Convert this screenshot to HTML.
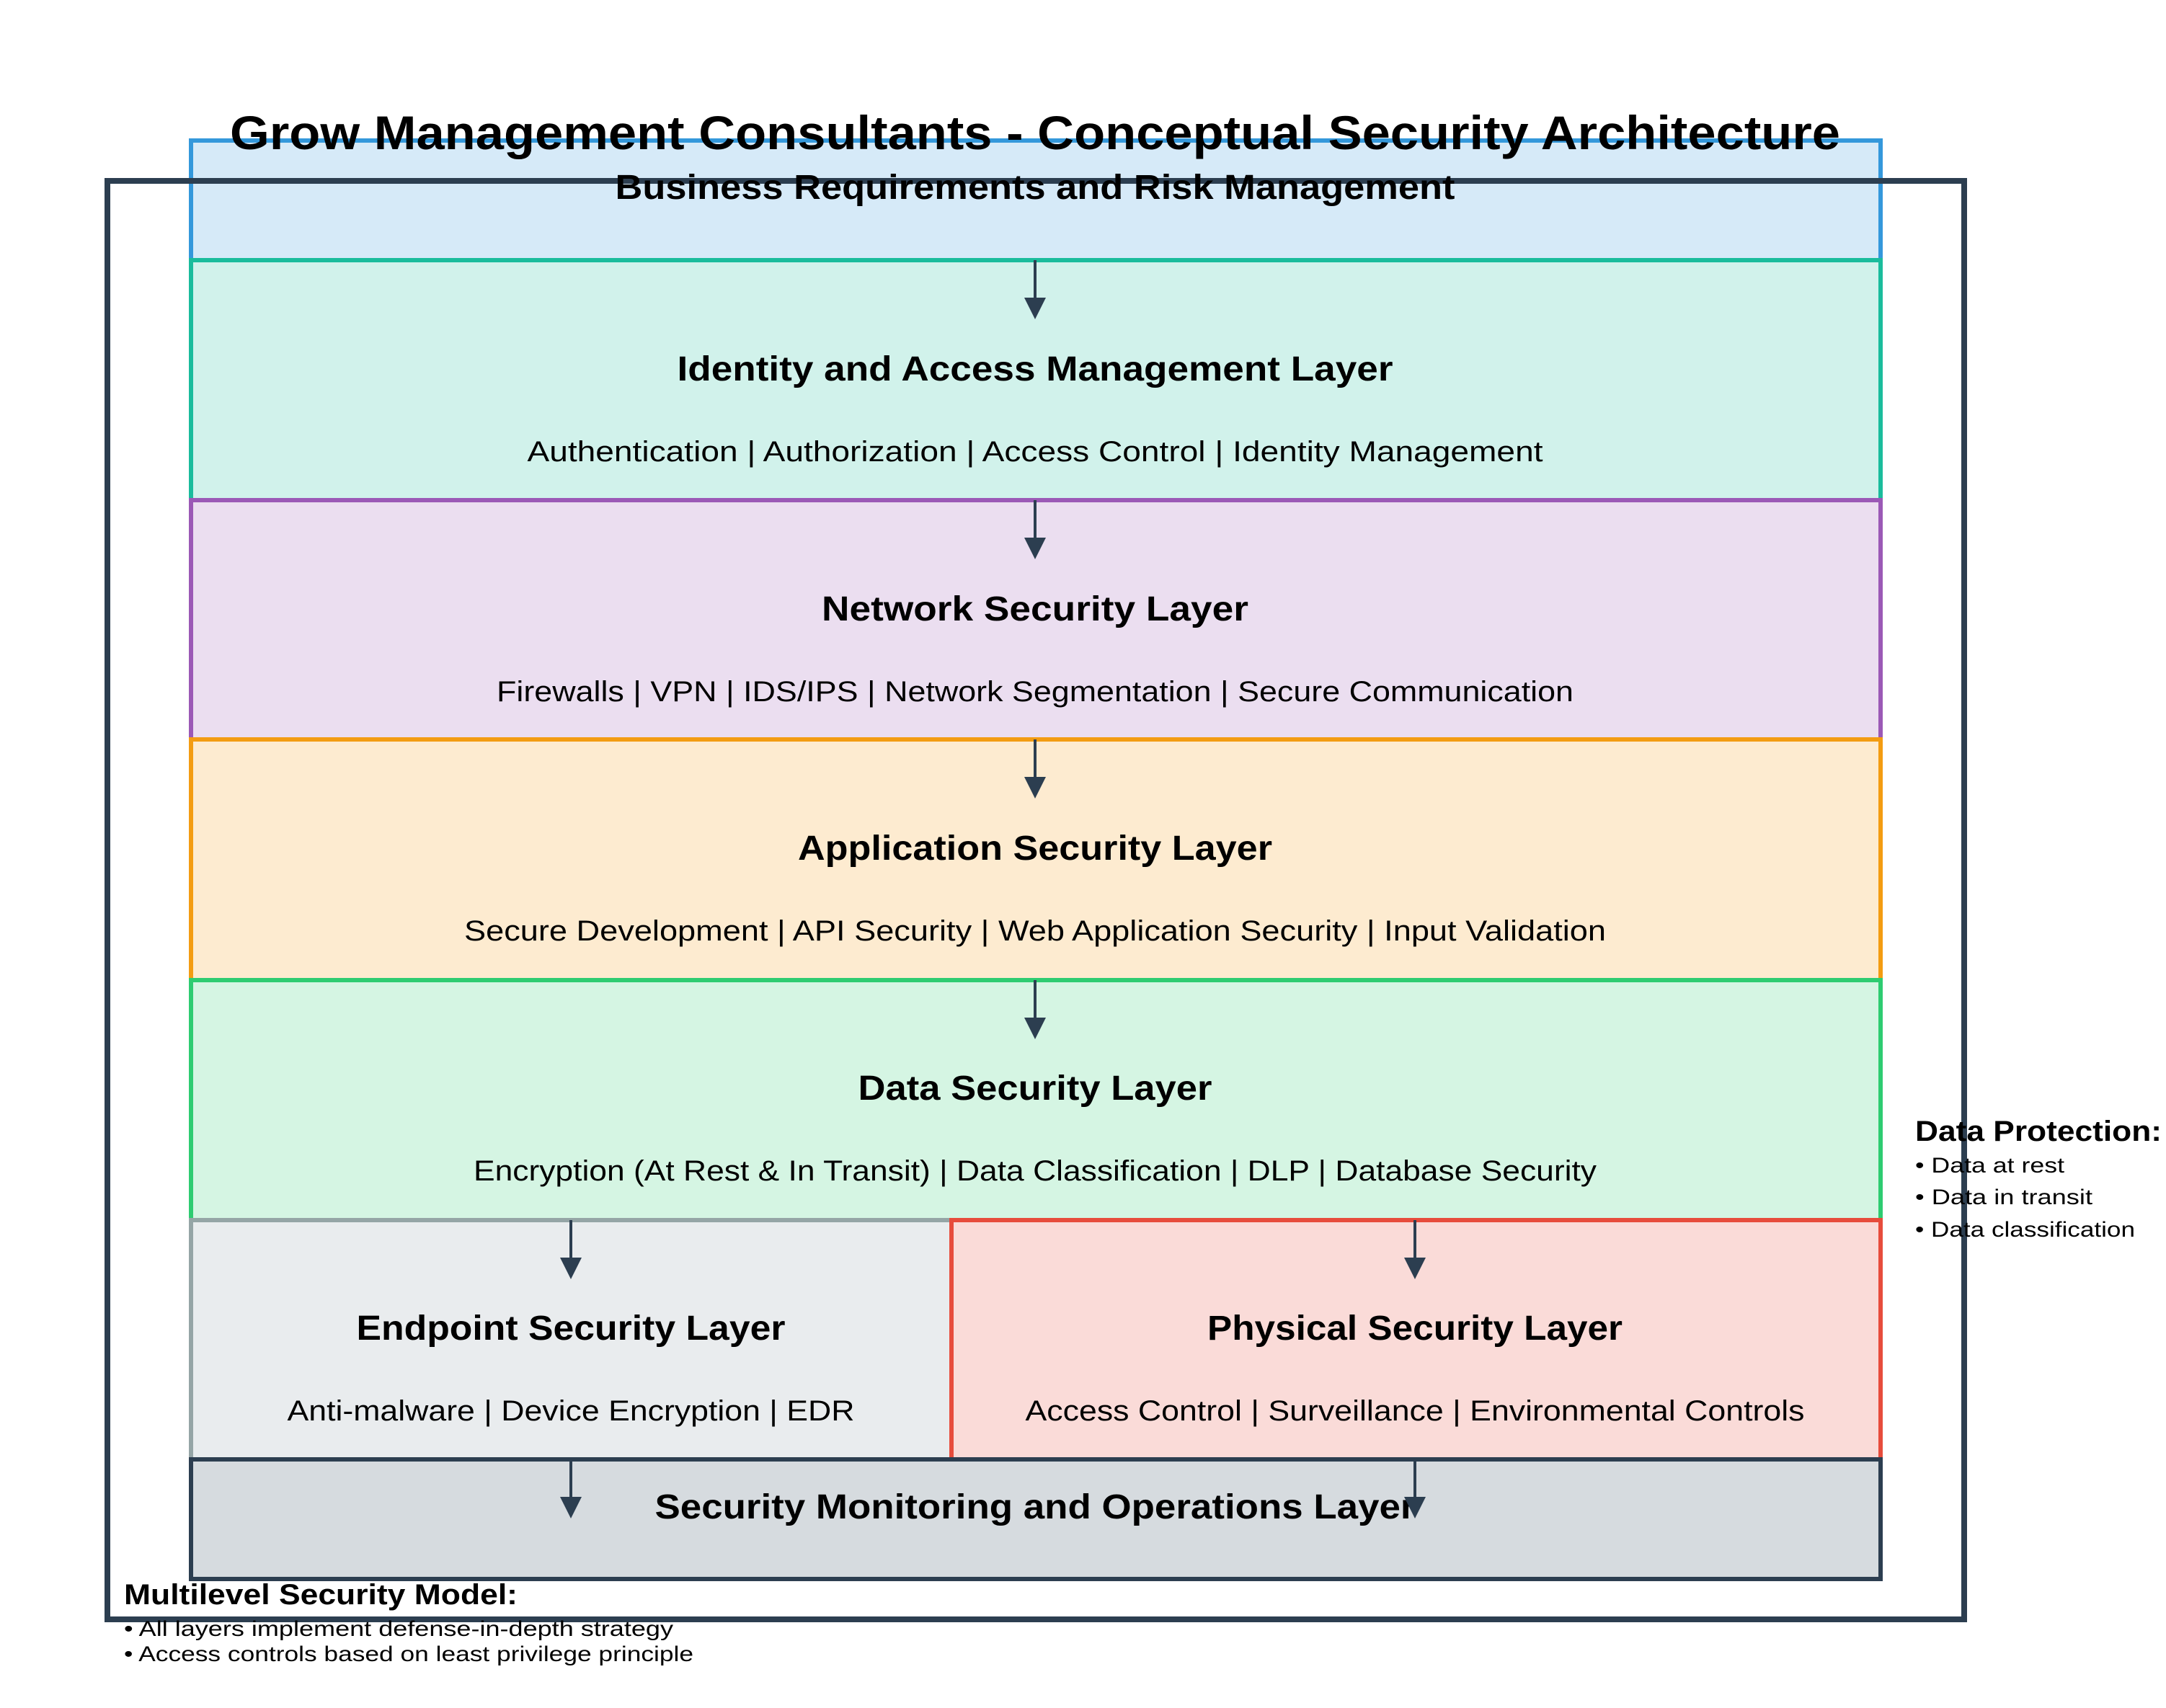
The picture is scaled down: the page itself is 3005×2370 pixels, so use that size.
<!DOCTYPE html>
<html><head><meta charset="utf-8"><style>
html,body{margin:0;padding:0;background:#fff;}
svg{display:block;}
text{font-family:"Liberation Sans","DejaVu Sans",sans-serif;fill:#000;}
.h{font-weight:bold;font-size:48px;}
.s{font-size:40px;}
</style></head><body>
<svg width="3005" height="2370" viewBox="0 0 3005 2370" xmlns="http://www.w3.org/2000/svg">
<rect x="0" y="0" width="3005" height="2370" fill="#fff"/>

<rect x="265" y="195" width="2344" height="166" fill="#d6eaf8" stroke="#3498db" stroke-width="6"/>
<rect x="265" y="361" width="2344" height="333" fill="#d1f2eb" stroke="#1abc9c" stroke-width="6"/>
<rect x="265" y="694" width="2344" height="332" fill="#ebdef0" stroke="#9b59b6" stroke-width="6"/>
<rect x="265" y="1026" width="2344" height="334" fill="#fdebd0" stroke="#f39c12" stroke-width="6"/>
<rect x="265" y="1360" width="2344" height="333" fill="#d5f5e3" stroke="#2ecc71" stroke-width="6"/>
<rect x="265" y="1693" width="1055" height="332" fill="#e9ecee" stroke="#95a5a6" stroke-width="6"/>
<rect x="1320" y="1693" width="1289" height="332" fill="#fadbd8" stroke="#e74c3c" stroke-width="6"/>
<rect x="265" y="2025" width="2344" height="166" fill="#d6dbdf" stroke="#2c3e50" stroke-width="6"/>

<rect x="149" y="251" width="2576" height="1996" fill="none" stroke="#2c3e50" stroke-width="8"/>
<text x="1436" y="207" text-anchor="middle" font-weight="bold" font-size="66" textLength="2234" lengthAdjust="spacingAndGlyphs">Grow Management Consultants - Conceptual Security Architecture</text>

<text class="h" x="1436" y="276" text-anchor="middle" textLength="1165" lengthAdjust="spacingAndGlyphs">Business Requirements and Risk Management</text>

<text class="h" x="1436" y="528" text-anchor="middle" textLength="993" lengthAdjust="spacingAndGlyphs">Identity and Access Management Layer</text>
<text class="s" x="1436" y="640" text-anchor="middle" textLength="1409" lengthAdjust="spacingAndGlyphs">Authentication | Authorization | Access Control | Identity Management</text>

<text class="h" x="1436" y="861" text-anchor="middle" textLength="592" lengthAdjust="spacingAndGlyphs">Network Security Layer</text>
<text class="s" x="1436" y="973" text-anchor="middle" textLength="1494" lengthAdjust="spacingAndGlyphs">Firewalls | VPN | IDS/IPS | Network Segmentation | Secure Communication</text>

<text class="h" x="1436" y="1193" text-anchor="middle" textLength="658" lengthAdjust="spacingAndGlyphs">Application Security Layer</text>
<text class="s" x="1436" y="1305" text-anchor="middle" textLength="1584" lengthAdjust="spacingAndGlyphs">Secure Development | API Security | Web Application Security | Input Validation</text>

<text class="h" x="1436" y="1526" text-anchor="middle" textLength="491" lengthAdjust="spacingAndGlyphs">Data Security Layer</text>
<text class="s" x="1436" y="1638" text-anchor="middle" textLength="1558" lengthAdjust="spacingAndGlyphs">Encryption (At Rest &amp; In Transit) | Data Classification | DLP | Database Security</text>

<text class="h" x="792" y="1859" text-anchor="middle" textLength="595" lengthAdjust="spacingAndGlyphs">Endpoint Security Layer</text>
<text class="s" x="792" y="1971" text-anchor="middle" textLength="787" lengthAdjust="spacingAndGlyphs">Anti-malware | Device Encryption | EDR</text>

<text class="h" x="1963" y="1859" text-anchor="middle" textLength="576" lengthAdjust="spacingAndGlyphs">Physical Security Layer</text>
<text class="s" x="1963" y="1971" text-anchor="middle" textLength="1081" lengthAdjust="spacingAndGlyphs">Access Control | Surveillance | Environmental Controls</text>

<text class="h" x="1436" y="2107" text-anchor="middle" textLength="1055" lengthAdjust="spacingAndGlyphs">Security Monitoring and Operations Layer</text>

<g stroke="#2c3e50" stroke-width="4" fill="#2c3e50">
<line x1="1436" y1="361" x2="1436" y2="418"/><polygon points="1421,413 1451,413 1436,443" stroke="none"/>
<line x1="1436" y1="694" x2="1436" y2="751"/><polygon points="1421,746 1451,746 1436,776" stroke="none"/>
<line x1="1436" y1="1026" x2="1436" y2="1083"/><polygon points="1421,1078 1451,1078 1436,1108" stroke="none"/>
<line x1="1436" y1="1360" x2="1436" y2="1417"/><polygon points="1421,1412 1451,1412 1436,1442" stroke="none"/>
<line x1="792" y1="1693" x2="792" y2="1750"/><polygon points="777,1745 807,1745 792,1775" stroke="none"/>
<line x1="1963" y1="1693" x2="1963" y2="1750"/><polygon points="1948,1745 1978,1745 1963,1775" stroke="none"/>
<line x1="792" y1="2025" x2="792" y2="2082"/><polygon points="777,2077 807,2077 792,2107" stroke="none"/>
<line x1="1963" y1="2025" x2="1963" y2="2082"/><polygon points="1948,2077 1978,2077 1963,2107" stroke="none"/>
</g>

<text x="2657" y="1583" font-weight="bold" font-size="40" textLength="342" lengthAdjust="spacingAndGlyphs">Data Protection:</text>
<text x="2657" y="1627" font-size="30" textLength="207" lengthAdjust="spacingAndGlyphs">• Data at rest</text>
<text x="2657" y="1671" font-size="30" textLength="246" lengthAdjust="spacingAndGlyphs">• Data in transit</text>
<text x="2657" y="1716" font-size="30" textLength="305" lengthAdjust="spacingAndGlyphs">• Data classification</text>

<text x="172" y="2226" font-weight="bold" font-size="40" textLength="546" lengthAdjust="spacingAndGlyphs">Multilevel Security Model:</text>
<text x="172" y="2270" font-size="30" textLength="762" lengthAdjust="spacingAndGlyphs">• All layers implement defense-in-depth strategy</text>
<text x="172" y="2305" font-size="30" textLength="790" lengthAdjust="spacingAndGlyphs">• Access controls based on least privilege principle</text>
</svg>
</body></html>
